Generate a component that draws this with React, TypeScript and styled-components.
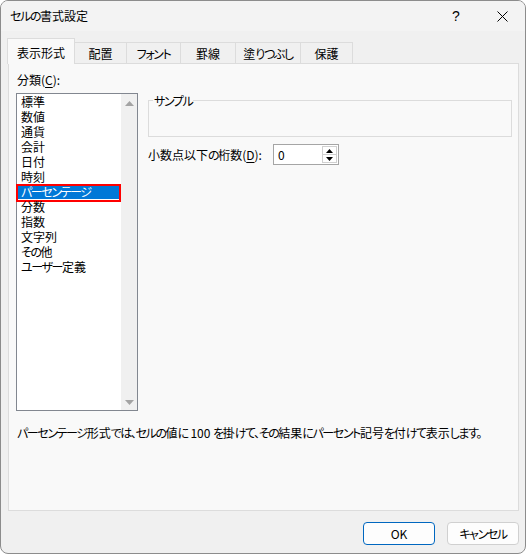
import React from "react";
import styled, { createGlobalStyle } from "styled-components";

const GlobalStyle = createGlobalStyle`
  html, body { margin: 0; padding: 0; background: #ffffff; }
  body {
    font-family: "Noto Sans CJK JP", "Noto Sans", sans-serif;
    font-size: 12px;
    font-feature-settings: "palt";
    color: #000;
  }
`;

const Window = styled.div`
  width: 526px;
  height: 554px;
  box-sizing: border-box;
  border: 1px solid #8c8c8c;
  border-radius: 8px;
  overflow: hidden;
  display: flex;
  flex-direction: column;
  background: #f0f0f0;
`;

const TitleBar = styled.div`
  height: 30px;
  flex: none;
  background: #f3f3f3;
  display: flex;
  align-items: center;
  padding-left: 9px;
`;

const TitleText = styled.div`
  flex: 1;
  line-height: 16px;
`;

const CaptionButton = styled.div`
  width: 46px;
  height: 30px;
  display: flex;
  align-items: center;
  justify-content: center;
  font-family: "Liberation Sans", sans-serif;
  font-size: 14px;
`;

const Body = styled.div`
  flex: 1;
  display: flex;
  flex-direction: column;
  padding: 7px 0 0 6px;
`;

const TabStrip = styled.div`
  display: flex;
  align-items: flex-start;
  height: 26px;
  margin-bottom: -1px;
  position: relative;
  z-index: 1;
`;

const Tab = styled.div<{ $w: number; $active?: boolean }>`
  width: ${(p) => p.$w}px;
  box-sizing: border-box;
  height: ${(p) => (p.$active ? 26 : 21)}px;
  margin-top: ${(p) => (p.$active ? 0 : 4)}px;
  border: 1px solid #dcdcdc;
  border-bottom: none;
  border-left: ${(p) => (p.$active ? "1px solid #dcdcdc" : "none")};
  background: ${(p) => (p.$active ? "#f9f9f9" : "#f0f0f0")};
  display: flex;
  align-items: center;
  justify-content: center;
  line-height: 15px;
  padding-top: ${(p) => (p.$active ? 1 : 0)}px;
`;

const Panel = styled.div`
  margin-left: 1px;
  width: 511px;
  height: 448px;
  box-sizing: border-box;
  border: 1px solid #dcdcdc;
  background: #f9f9f9;
  padding: 8px 6px 0 7px;
`;

const Columns = styled.div`
  display: grid;
  grid-template-columns: 122px 1fr;
  column-gap: 10px;
`;

const LeftCol = styled.div`
  display: flex;
  flex-direction: column;
`;

const FieldLabel = styled.div`
  line-height: 15px;
  padding-left: 1px;
  margin-bottom: 6px;
`;

const ListBox = styled.div`
  height: 318px;
  box-sizing: border-box;
  border: 1px solid #828790;
  background: #fff;
  display: flex;
`;

const Items = styled.div`
  flex: 1;
`;

const Item = styled.div<{ $selected?: boolean }>`
  position: relative;
  height: 15px;
  line-height: 15px;
  padding-left: 4px;
  white-space: nowrap;
  background: ${(p) => (p.$selected ? "#0078d7" : "transparent")};
  color: ${(p) => (p.$selected ? "#fff" : "#000")};
  ${(p) =>
    p.$selected
      ? `&::after {
          content: "";
          position: absolute;
          top: 0;
          bottom: -3px;
          left: -1px;
          right: 0;
          border: 2px solid #ff0000;
        }`
      : ""}
`;

const ScrollBar = styled.div`
  width: 16px;
  background: #f0f0f0;
  display: flex;
  flex-direction: column;
  justify-content: space-between;
  align-items: center;
  padding: 7px 0 5px;
`;

const RightCol = styled.div`
  display: flex;
  flex-direction: column;
  padding-top: 28px;
`;

const Group = styled.div`
  position: relative;
  height: 37px;
  box-sizing: border-box;
  border: 1px solid #dcdcdc;
`;

const GroupLabel = styled.div`
  position: absolute;
  top: -8px;
  left: 4px;
  padding: 0 1px;
  line-height: 15px;
  background: #f9f9f9;
`;

const SpinRow = styled.div`
  margin-top: 7px;
  display: flex;
  align-items: center;
  gap: 11px;
`;

const SpinLabel = styled.div`
  line-height: 15px;
`;

const SpinBox = styled.div`
  width: 66px;
  height: 21px;
  box-sizing: border-box;
  border: 1px solid #a5a5a5;
  background: #fff;
  display: flex;
  align-items: center;
  padding-left: 4px;
`;

const SpinValue = styled.div`
  flex: 1;
  line-height: 15px;
`;

const SpinButtons = styled.div`
  width: 15px;
  height: 17px;
  margin-right: 1px;
  box-sizing: border-box;
  border: 1px solid #d0d0d0;
  display: flex;
  flex-direction: column;
`;

const SpinHalf = styled.div<{ $bottom?: boolean }>`
  flex: 1;
  display: flex;
  align-items: center;
  justify-content: center;
  border-top: ${(p) => (p.$bottom ? "1px solid #d0d0d0" : "none")};
`;

const Description = styled.div`
  margin-top: 14px;
  line-height: 15px;
  padding-left: 1px;
  white-space: nowrap;
`;

const Footer = styled.div`
  display: flex;
  justify-content: flex-end;
  gap: 12px;
  padding: 11px 6px 0 0;
`;

const Button = styled.div<{ $primary?: boolean }>`
  width: 72px;
  height: 23px;
  box-sizing: border-box;
  border: 1px solid ${(p) => (p.$primary ? "#0067c0" : "#d0d0d0")};
  border-radius: 4px;
  background: #fdfdfd;
  display: flex;
  align-items: center;
  justify-content: center;
  line-height: 15px;
`;

const U = styled.span`
  text-decoration: underline;
  text-underline-offset: 2px;
`;

/* Kana in the reference's UI font are narrower than in Noto Sans CJK */
const Kana = styled.span`
  letter-spacing: -1.4px;
`;

const KANA_RE = /([\u3040-\u30ff\u3001\u3002]+)/;

const J = ({ text }: { text: string }) => (
  <>
    {text.split(KANA_RE).map((part, i) =>
      part === "" ? null : KANA_RE.test(part) ? (
        <Kana key={i}>{part}</Kana>
      ) : (
        <React.Fragment key={i}>{part}</React.Fragment>
      )
    )}
  </>
);

const tabs = [
  { label: "表示形式", w: 68, active: true },
  { label: "配置", w: 52 },
  { label: "フォント", w: 54 },
  { label: "罫線", w: 55 },
  { label: "塗りつぶし", w: 65 },
  { label: "保護", w: 52 },
];

const categories = [
  "標準",
  "数値",
  "通貨",
  "会計",
  "日付",
  "時刻",
  "パーセンテージ",
  "分数",
  "指数",
  "文字列",
  "その他",
  "ユーザー定義",
];

const Tri = ({ up, color, w = 9, h = 5 }: { up?: boolean; color: string; w?: number; h?: number }) => (
  <svg width={w} height={h} viewBox={`0 0 ${w} ${h}`}>
    <polygon
      points={up ? `0,${h} ${w / 2},0 ${w},${h}` : `0,0 ${w},0 ${w / 2},${h}`}
      fill={color}
    />
  </svg>
);

export default function App() {
  return (
    <>
      <GlobalStyle />
      <Window>
        <TitleBar>
          <TitleText>
            <J text="セルの書式設定" />
          </TitleText>
          <CaptionButton>?</CaptionButton>
          <CaptionButton>
            <svg width="11" height="11" viewBox="0 0 11 11">
              <path d="M0.5 0.5 L10.5 10.5 M10.5 0.5 L0.5 10.5" stroke="#000" strokeWidth="1" />
            </svg>
          </CaptionButton>
        </TitleBar>
        <Body>
          <TabStrip>
            {tabs.map((t) => (
              <Tab key={t.label} $w={t.w} $active={t.active}>
                <J text={t.label} />
              </Tab>
            ))}
          </TabStrip>
          <Panel>
            <Columns>
              <LeftCol>
                <FieldLabel>
                  分類(<U>C</U>):
                </FieldLabel>
                <ListBox>
                  <Items>
                    {categories.map((c) => (
                      <Item key={c} $selected={c === "パーセンテージ"}>
                        <J text={c} />
                      </Item>
                    ))}
                  </Items>
                  <ScrollBar>
                    <Tri up color="#a3a3a3" />
                    <Tri color="#a3a3a3" />
                  </ScrollBar>
                </ListBox>
              </LeftCol>
              <RightCol>
                <Group>
                  <GroupLabel>
                    <J text="サンプル" />
                  </GroupLabel>
                </Group>
                <SpinRow>
                  <SpinLabel>
                    <J text="小数点以下の桁数" />(<U>D</U>):
                  </SpinLabel>
                  <SpinBox>
                    <SpinValue>0</SpinValue>
                    <SpinButtons>
                      <SpinHalf>
                        <Tri up color="#000" w={7} h={4} />
                      </SpinHalf>
                      <SpinHalf $bottom>
                        <Tri color="#000" w={7} h={4} />
                      </SpinHalf>
                    </SpinButtons>
                  </SpinBox>
                </SpinRow>
              </RightCol>
            </Columns>
            <Description>
              <J text="パーセンテージ形式では、セルの値に 100 を掛けて、その結果にパーセント記号を付けて表示します。" />
            </Description>
          </Panel>
          <Footer>
            <Button $primary>OK</Button>
            <Button>
              <J text="キャンセル" />
            </Button>
          </Footer>
        </Body>
      </Window>
    </>
  );
}
